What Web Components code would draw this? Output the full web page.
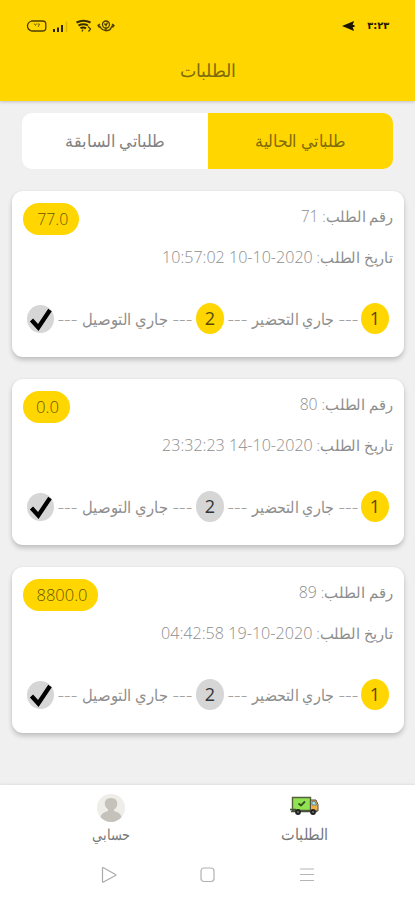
<!DOCTYPE html>
<html lang="ar">
<head>
<meta charset="utf-8">
<title>الطلبات</title>
<style>
html,body{margin:0;height:100%}
body{background:#f0f0f0;font-family:"Open Sans","DejaVu Sans",sans-serif;font-weight:300;color:#888;overflow:hidden}
</style>
</head>
<body>
<orders-app></orders-app>
<script>
const make = (host, html) => {
  const t = document.createElement('template');
  t.innerHTML = html;
  host.attachShadow({mode:'open'}).append(t.content.cloneNode(true));
  return host.shadowRoot;
};

/* One line of text set to an exact width; an optional label is set slightly smaller. */
customElements.define('fit-text', class extends HTMLElement {
  connectedCallback(){
    if (this.shadowRoot) return;
    const w = +this.getAttribute('w'), s = +(this.getAttribute('size') || 16);
    const r = make(this, `<style>
      :host{display:block;flex:none;width:${w}px;height:24px;direction:rtl}
      span{display:inline-block;white-space:nowrap;font-size:${s}px;line-height:24px;transform-origin:100% 50%}
      small{font-size:15px}
    </style><span></span>`);
    const el = r.querySelector('span');
    if (this.hasAttribute('label')) {
      const l = document.createElement('small');
      l.textContent = this.getAttribute('label') + ' ';
      el.append(l);
    }
    el.append(this.getAttribute('text'));
    el.style.transform = `scaleX(${w / el.getBoundingClientRect().width})`;
  }
});

customElements.define('status-bar', class extends HTMLElement {
  connectedCallback(){
    make(this, `<style>
      :host{display:flex;direction:ltr;height:52px;box-sizing:border-box;padding:0 26px;justify-content:space-between;align-items:center;color:#1c1800}
      div{display:flex;align-items:center}
      svg{display:block}
      fit-text{font-family:"DejaVu Sans",sans-serif;font-weight:700}
    </style>
    <div><svg width="90" height="20" viewBox="0 0 90 20" fill="none" stroke="#4b3e00" stroke-width="1.300">
      <path d="M5.500 5H16.500q3.300 0 3.300 3v4q0 3-3.300 3H5.500Q1.500 13.500 1.500 10T5.500 5z"/>
      <path d="M8 7.500l1.500 2 1-2M11.500 8h2l-1.300 3" stroke-width=".7"/>
      <g stroke="none" fill="#2c2400"><path d="M27 13h2v3h-2zM31 11.500h2V16h-2zM35 9h2v7h-2z"/><path d="M39.800 5.500h1.500V16h-1.500z" fill="#dcb900"/></g>
      <path d="M50.500 6.500q7-3.500 14 0M52.500 9.500q5-2.500 9.500 0M54.500 12.300q2.500-1.800 5.500 0" stroke="#352b00" stroke-width="2"/>
      <path d="M57 13.500l-1 2M62 10.500l2.500 2.500-2 2.500" stroke-width="1.300"/>
      <ellipse cx="80" cy="8.500" rx="3.500" ry="3.500"/><path d="M72 9.500q2 .5 3 2.500t5 2.500 5-2.500 3-2.500M74 8l-2 1.500 1.500 2M86 8l2 1.500-1.500 2M78.500 7.500l1.500 2 1.500-3M80 12v3.500"/>
    </svg></div>
    <div style="gap:12px"><svg width="13" height="12" viewBox="0 0 14 13"><path d="M0 6.500L13 1l-1.500 4.500h2v2h-2L13 12z" fill="#1c1500"/></svg><fit-text w="22" size="10" text="٣:٢٣"></fit-text></div>`);
  }
});

customElements.define('page-header', class extends HTMLElement {
  connectedCallback(){
    make(this, `<style>
      :host{display:flex;flex-direction:column;height:101px;background:#ffd600;box-shadow:0 1px 3px #0003;color:#7b6a0c}
      div{display:flex;justify-content:center;padding-top:6px}
    </style><status-bar></status-bar><div><slot></slot></div>`);
  }
});

customElements.define('tab-item', class extends HTMLElement {
  connectedCallback(){
    make(this, `<style>
      :host{display:flex;align-items:center;justify-content:center;background:#fff;color:#828282}
      :host([active]){background:#ffd600;color:#7f6c0c}
    </style><slot></slot>`);
  }
});
customElements.define('tab-switch', class extends HTMLElement {
  connectedCallback(){
    make(this, `<style>
      :host{display:grid;direction:rtl;grid-template-columns:185px 186px;height:56px;margin:12px 22px 0;border-radius:10px;overflow:hidden}
    </style><slot></slot>`);
  }
});

customElements.define('step-dot', class extends HTMLElement {
  connectedCallback(){
    const n = this.getAttribute('n');
    make(this, `<style>
      :host{display:flex;flex:none;width:28px;height:31px;border-radius:50%;background:#d6d6d6;align-items:center;justify-content:center;color:#333;font-size:18px;font-weight:400;line-height:31px}
      :host([on]){background:#ffd600;color:#584900}
      :host([done]){width:27px;height:28px}
      svg{display:block}
    </style>${n ? `<span>${n}</span>` : `<svg width="27" height="28" viewBox="0 0 27 28"><path d="M4.500 15l6.800 7.500L23 5" fill="none" stroke="#000" stroke-width="4.300"/></svg>`}`);
  }
});

customElements.define('order-card', class extends HTMLElement {
  connectedCallback(){
    const a = k => this.getAttribute(k);
    make(this, `<style>
      :host{display:flex;flex-direction:column;direction:rtl;box-sizing:border-box;height:166px;padding:12px 11px 0;border-radius:11px;background:#fff;box-shadow:0 3px 5px #0003,0 0 2px #0001;color:#8e8e8e}
      .top{display:flex;justify-content:space-between;height:32px}
      .top>fit-text{margin-top:1px}
      .pill{box-sizing:border-box;width:${a('pill')}px;height:32px;padding:4px 11px 0 0;border-radius:16px;background:#ffd600;color:#665600}
      .date{margin-top:10px}
      .steps{display:flex;align-items:center;height:31px;margin-top:34px;padding-right:4px}
    </style>
    <div class="top"><fit-text w="${a('nw')}" label="رقم الطلب:" text="${a('number')}"></fit-text>
      <div class="pill"><fit-text w="${a('pw')}" text="${a('price')}"></fit-text></div></div>
    <fit-text class="date" w="${a('dw')}" size="16.500" label="تاريخ الطلب:" text="${a('date')}"></fit-text>
    <div class="steps">
      <step-dot n="1" on></step-dot>
      <fit-text style="margin-right:3px" w="20" text="---"></fit-text>
      <fit-text style="margin-right:4px" w="82" text="جاري التحضير"></fit-text>
      <fit-text style="margin-right:5px" w="20" text="---"></fit-text>
      <step-dot style="margin-right:3px" n="2" ${this.hasAttribute('ready') ? 'on' : ''}></step-dot>
      <fit-text style="margin-right:4px" w="20" text="---"></fit-text>
      <fit-text style="margin-right:4px" w="86" text="جاري التوصيل"></fit-text>
      <fit-text style="margin-right:5px" w="20" text="---"></fit-text>
      <step-dot style="margin-right:3px" done></step-dot>
    </div>`);
  }
});

customElements.define('nav-item', class extends HTMLElement {
  connectedCallback(){
    make(this, `<style>
      :host{display:flex;flex-direction:column;align-items:center;color:#777}
      .icon{height:28px;display:flex;align-items:center}
    </style><div class="icon"><slot name="icon"></slot></div><slot></slot>`);
  }
});
customElements.define('bottom-bar', class extends HTMLElement {
  connectedCallback(){
    make(this, `<style>
      :host{display:flex;flex-direction:column;height:115px;background:#fff;box-shadow:0 -1px 2px #0001}
      .nav{display:flex;justify-content:space-between;padding:9px 87px 0 87px}
      .nav nav-item:first-child{width:48px}
      .sys{display:flex;justify-content:space-between;align-items:center;padding:0 99px 0 100px;margin-top:20px}
      svg{display:block}
      .truck{margin-top:-5px}
    </style>
    <div class="nav">
      <nav-item><svg slot="icon" width="28" height="28" viewBox="0 0 28 28"><circle cx="14" cy="14" r="14" fill="#eeede8"/><path d="M14 4q6.500 0 6.300 6-.1 3.500-3.300 5.500v1.500q6.500 1.500 7.500 6.300Q20 28 14 28T3.500 23.300Q4.500 18.500 11 17v-1.500q-3-2-3.300-5.500Q7.500 4 14 4z" fill="#c5c2bb"/></svg><fit-text w="38" size="15" text="حسابي"></fit-text></nav-item>
      <nav-item><svg class="truck" slot="icon" width="29" height="20" viewBox="0 0 29 20">
        <path d="M2.500 1.500h18v13h-18z" fill="#92e354" stroke="#536039" stroke-width="1.400"/>
        <path d="M20.500 4H26l2 4.500V15h-7.500z" fill="#eeb046" stroke="#5b5142"/>
        <path d="M22 5.500h3l1.500 3.500H22z" fill="#9de7ed" stroke="#536b70" stroke-width=".7"/>
        <path d="M8.500 7.500l2.500 2 4-4" fill="none" stroke="#35521d" stroke-width="1.800"/>
        <path d="M0 13.500h6M1 15.500h26" stroke="#46513b" stroke-width="1.300"/>
        <circle cx="8" cy="16" r="2.900" fill="#222"/><circle cx="23" cy="16" r="2.900" fill="#222"/>
        <circle cx="8" cy="16" r=".8" fill="#aaa"/><circle cx="23" cy="16" r=".8" fill="#aaa"/>
      </svg><fit-text w="47" size="16" text="الطلبات"></fit-text></nav-item>
    </div>
    <div class="sys">
      <svg width="18" height="18" viewBox="0 0 18 18" fill="none" stroke="#aaa" stroke-width="1.200"><path d="M2.500 2v13.500q0 1 1 .4L15.500 9.500q1-.5 0-1L3.500 1.800q-1-.5-1 .2z"/></svg>
      <svg width="18" height="18" viewBox="0 0 18 18" fill="none" stroke="#b2b2b2" stroke-width="1.200"><rect x="2" y="2" width="13" height="13.500" rx="3"/></svg>
      <svg width="18" height="18" viewBox="0 0 18 18" stroke="#b5b5b5" stroke-width="1.200"><path d="M2 3h14M2 8.500h14M2 14.500h14"/></svg>
    </div>`);
  }
});

customElements.define('orders-app', class extends HTMLElement {
  connectedCallback(){
    make(this, `<style>
      :host{display:flex;flex-direction:column;width:415px;height:900px;background:#f0f0f0}
      main{display:flex;flex-direction:column;gap:22px;padding:22px 11px 0 12px;flex:1}
    </style>
    <page-header><fit-text w="56" size="18" text="الطلبات"></fit-text></page-header>
    <tab-switch><tab-item active><fit-text w="91" size="17" text="طلباتي الحالية"></fit-text></tab-item><tab-item><fit-text w="100" size="17" text="طلباتي السابقة"></fit-text></tab-item></tab-switch>
    <main>
      <order-card number="71" nw="92" price="77.0" pw="31" pill="56" date="2020-10-10 10:57:02" dw="231" ready></order-card>
      <order-card number="80" nw="93" price="0.0" pw="23" pill="47" date="2020-10-14 23:32:23" dw="231"></order-card>
      <order-card number="89" nw="94" price="8800.0" pw="51" pill="75" date="2020-10-19 04:42:58" dw="232"></order-card>
    </main>
    <bottom-bar></bottom-bar>`);
  }
});
</script>
</body>
</html>
